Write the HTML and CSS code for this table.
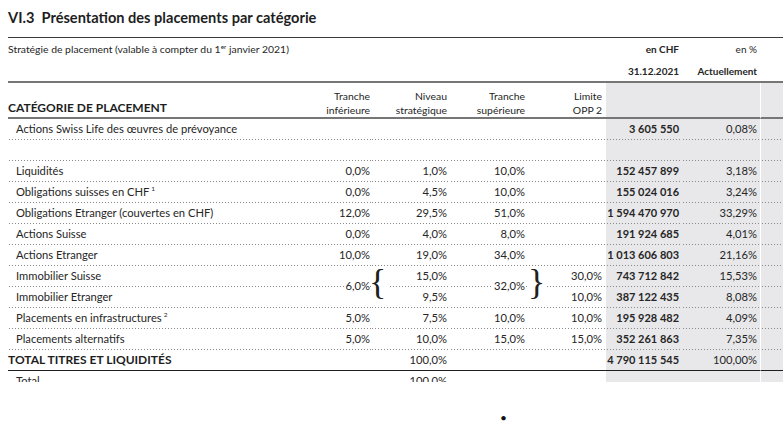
FILE: index.html
```html
<!DOCTYPE html>
<html lang="fr">
<head>
<meta charset="utf-8">
<title>VI.3 Présentation des placements par catégorie</title>
<link rel="stylesheet" href="styles.css">
</head>
<body>
<div class="page">
  <h1 class="title">VI.3&nbsp; Présentation des placements par catégorie</h1>
  <div class="clip">
    <table class="alloc">
      <colgroup>
        <col class="c-label"><col class="c-inf"><col class="c-br1"><col class="c-niv"><col class="c-sup"><col class="c-br2"><col class="c-opp"><col class="c-chf"><col class="c-pct"><col class="c-tail">
      </colgroup>
      <thead>
        <tr class="meta meta-1">
          <td colspan="7" class="lead">Stratégie de placement (valable à compter du 1<sup class="ord">er</sup> janvier 2021)</td>
          <td class="n b">en CHF</td>
          <td class="n">en %</td>
          <td></td>
        </tr>
        <tr class="meta meta-2">
          <td colspan="7"></td>
          <td class="n b">31.12.2021</td>
          <td class="n b">Actuellement</td>
          <td></td>
        </tr>
        <tr class="colhead">
          <th class="cat">CATÉGORIE DE PLACEMENT</th>
          <th class="n inf">Tranche<br>inférieure</th>
          <th></th>
          <th class="n">Niveau<br>stratégique</th>
          <th class="n">Tranche<br>supérieure</th>
          <th></th>
          <th class="n opp">Limite<br>OPP 2</th>
          <th class="g"></th>
          <th class="g"></th>
          <th class="g tail"></th>
        </tr>
      </thead>
      <tbody>
        <tr class="row">
          <td class="lab">Actions Swiss Life des œuvres de prévoyance</td>
          <td></td><td></td><td></td><td></td><td></td><td></td>
          <td class="n b g">3 605 550</td><td class="n g">0,08%</td><td class="g tail"></td>
        </tr>
        <tr class="row">
          <td class="lab">&nbsp;</td>
          <td></td><td></td><td></td><td></td><td></td><td></td>
          <td class="g"></td><td class="g"></td><td class="g tail"></td>
        </tr>
        <tr class="row">
          <td class="lab">Liquidités</td>
          <td class="n inf">0,0%</td><td></td><td class="n">1,0%</td><td class="n">10,0%</td><td></td><td class="n opp"></td>
          <td class="n b g">152 457 899</td><td class="n g">3,18%</td><td class="g tail"></td>
        </tr>
        <tr class="row">
          <td class="lab">Obligations suisses en CHF<sup class="fn">1</sup></td>
          <td class="n inf">0,0%</td><td></td><td class="n">4,5%</td><td class="n">10,0%</td><td></td><td class="n opp"></td>
          <td class="n b g">155 024 016</td><td class="n g">3,24%</td><td class="g tail"></td>
        </tr>
        <tr class="row">
          <td class="lab">Obligations Etranger (couvertes en CHF)</td>
          <td class="n inf">12,0%</td><td></td><td class="n">29,5%</td><td class="n">51,0%</td><td></td><td class="n opp"></td>
          <td class="n b g">1 594 470 970</td><td class="n g">33,29%</td><td class="g tail"></td>
        </tr>
        <tr class="row">
          <td class="lab">Actions Suisse</td>
          <td class="n inf">0,0%</td><td></td><td class="n">4,0%</td><td class="n">8,0%</td><td></td><td class="n opp"></td>
          <td class="n b g">191 924 685</td><td class="n g">4,01%</td><td class="g tail"></td>
        </tr>
        <tr class="row">
          <td class="lab">Actions Etranger</td>
          <td class="n inf">10,0%</td><td></td><td class="n">19,0%</td><td class="n">34,0%</td><td></td><td class="n opp"></td>
          <td class="n b g">1 013 606 803</td><td class="n g">21,16%</td><td class="g tail"></td>
        </tr>
        <tr class="row">
          <td class="lab">Immobilier Suisse</td>
          <td class="n inf anchor"><span class="ov ov-inf">6,0%</span></td>
          <td class="nodots anchor"><span class="brace">{</span></td>
          <td class="n">15,0%</td>
          <td class="n anchor"><span class="ov ov-sup">32,0%</span></td>
          <td class="nodots anchor"><span class="brace brace-r">}</span></td>
          <td class="n opp">30,0%</td>
          <td class="n b g">743 712 842</td><td class="n g">15,53%</td><td class="g tail"></td>
        </tr>
        <tr class="row">
          <td class="lab">Immobilier Etranger</td>
          <td class="n inf"></td>
          <td></td>
          <td class="n">9,5%</td>
          <td class="n"></td>
          <td></td>
          <td class="n opp">10,0%</td>
          <td class="n b g">387 122 435</td><td class="n g">8,08%</td><td class="g tail"></td>
        </tr>
        <tr class="row">
          <td class="lab">Placements en infrastructures<sup class="fn">2</sup></td>
          <td class="n inf">5,0%</td><td></td><td class="n">7,5%</td><td class="n">10,0%</td><td></td><td class="n opp">10,0%</td>
          <td class="n b g">195 928 482</td><td class="n g">4,09%</td><td class="g tail"></td>
        </tr>
        <tr class="row">
          <td class="lab">Placements alternatifs</td>
          <td class="n inf">5,0%</td><td></td><td class="n">10,0%</td><td class="n">15,0%</td><td></td><td class="n opp">15,0%</td>
          <td class="n b g">352 261 863</td><td class="n g">7,35%</td><td class="g tail"></td>
        </tr>
        <tr class="total">
          <td class="tot">TOTAL TITRES ET LIQUIDITÉS</td>
          <td></td><td></td><td class="n">100,0%</td><td></td><td></td><td></td>
          <td class="n b g">4 790 115 545</td><td class="n g">100,00%</td><td class="g tail"></td>
        </tr>
        <tr class="row last">
          <td class="lab">Total</td>
          <td></td><td></td><td class="n">100,0%</td><td></td><td></td><td></td>
          <td class="g"></td><td class="g"></td><td class="g tail"></td>
        </tr>
      </tbody>
    </table>
  </div>
  <div class="footdot">•</div>
</div>
</body>
</html>
```

FILE: styles.css
```css
html, body {
  margin: 0;
  padding: 0;
  background: #ffffff;
  overflow: hidden;
}

body {
  font-family: Lato, "Open Sans", "Liberation Sans", sans-serif;
  color: #262626;
}

.page {
  width: 783px;
}

.title {
  margin: 0 0 10px 8px;
  padding-top: 9px;
  font-size: 14.6px;
  line-height: 18px;
  font-weight: 700;
  color: #1e1e1e;
}

.clip {
  height: 345px;
  overflow: hidden;
  padding-left: 8px;
}

.alloc {
  width: 775px;
  table-layout: fixed;
  border-collapse: separate;
  border-spacing: 0;
  font-size: 11.2px;
}

.alloc td,
.alloc th {
  padding: 0;
  font-weight: 400;
  text-align: left;
  white-space: nowrap;
  overflow: visible;
}

col.c-label { width: 292px; }
col.c-inf { width: 71px; }
col.c-br1 { width: 18px; }
col.c-niv { width: 61px; }
col.c-sup { width: 78px; }
col.c-br2 { width: 18px; }
col.c-opp { width: 60px; }
col.c-chf { width: 76px; }
col.c-pct { width: 78px; }
col.c-tail { width: 23px; }

.alloc .n { text-align: right; padding-right: 3px; }
.alloc .n.inf { padding-right: 1px; }
.alloc .n.opp { padding-right: 4px; }
.alloc .b { font-weight: 700; font-size: 11px; }

/* header meta rows */
.meta td { font-size: 10.4px; }
.meta td.n { font-size: 10px; }
.meta-1 td {
  border-top: 1px solid #3a3a3a;
  line-height: 23px;
}
.meta-2 td {
  line-height: 20px;
  border-bottom: 2px solid #767676;
}

.ord {
  font-size: 6.5px;
  vertical-align: 4px;
  line-height: 0;
}

/* column headings */
.colhead th {
  font-size: 10.4px;
  line-height: 14px;
  padding-top: 6px;
  vertical-align: bottom;
  border-bottom: 2px solid #767676;
}
.colhead th.cat {
  font-size: 12px;
  font-weight: 700;
  line-height: 18px;
  color: #1e1e1e;
}

/* grey value columns */
.alloc .g { background-color: #e8e8ea; }
.alloc .tail { border-left: 1px solid #ffffff; }

/* data rows with dotted rules */
.row td {
  line-height: 20px;
  padding-bottom: 1px;
  background-image: linear-gradient(to right, #8a8a8a 1px, transparent 1px);
  background-size: 3px 1px;
  background-repeat: repeat-x;
  background-position: 1px 100%;
}
.row td.lab { padding-left: 8px; }
.row.last td,
.row td.nodots { background-image: none; }

.fn {
  font-size: 6.5px;
  vertical-align: 5px;
  line-height: 0;
  margin-left: 2px;
}

/* bracketed immobilier block: values and braces lie over the row rule */
.alloc td.anchor { position: relative; }
.ov {
  position: absolute;
  top: 10px;
  line-height: 20px;
  padding-left: 2px;
  background: #ffffff;
}
.ov-inf { right: 1px; }
.ov-sup { right: 3px; }

.brace {
  position: absolute;
  top: -2px;
  left: -2px;
  font-family: "Liberation Serif", "DejaVu Serif", serif;
  font-size: 36px;
  line-height: 36px;
  color: #1f1f1f;
}
.brace-r { left: 0; }

/* total row */
.total td {
  line-height: 20px;
  border-bottom: 1px solid #1e1e1e;
}
.total td.tot {
  font-size: 12px;
  font-weight: 700;
  color: #1e1e1e;
}

.footdot {
  padding: 30px 0 0 500px;
  font-size: 12px;
  line-height: 12px;
  color: #111111;
}
```
